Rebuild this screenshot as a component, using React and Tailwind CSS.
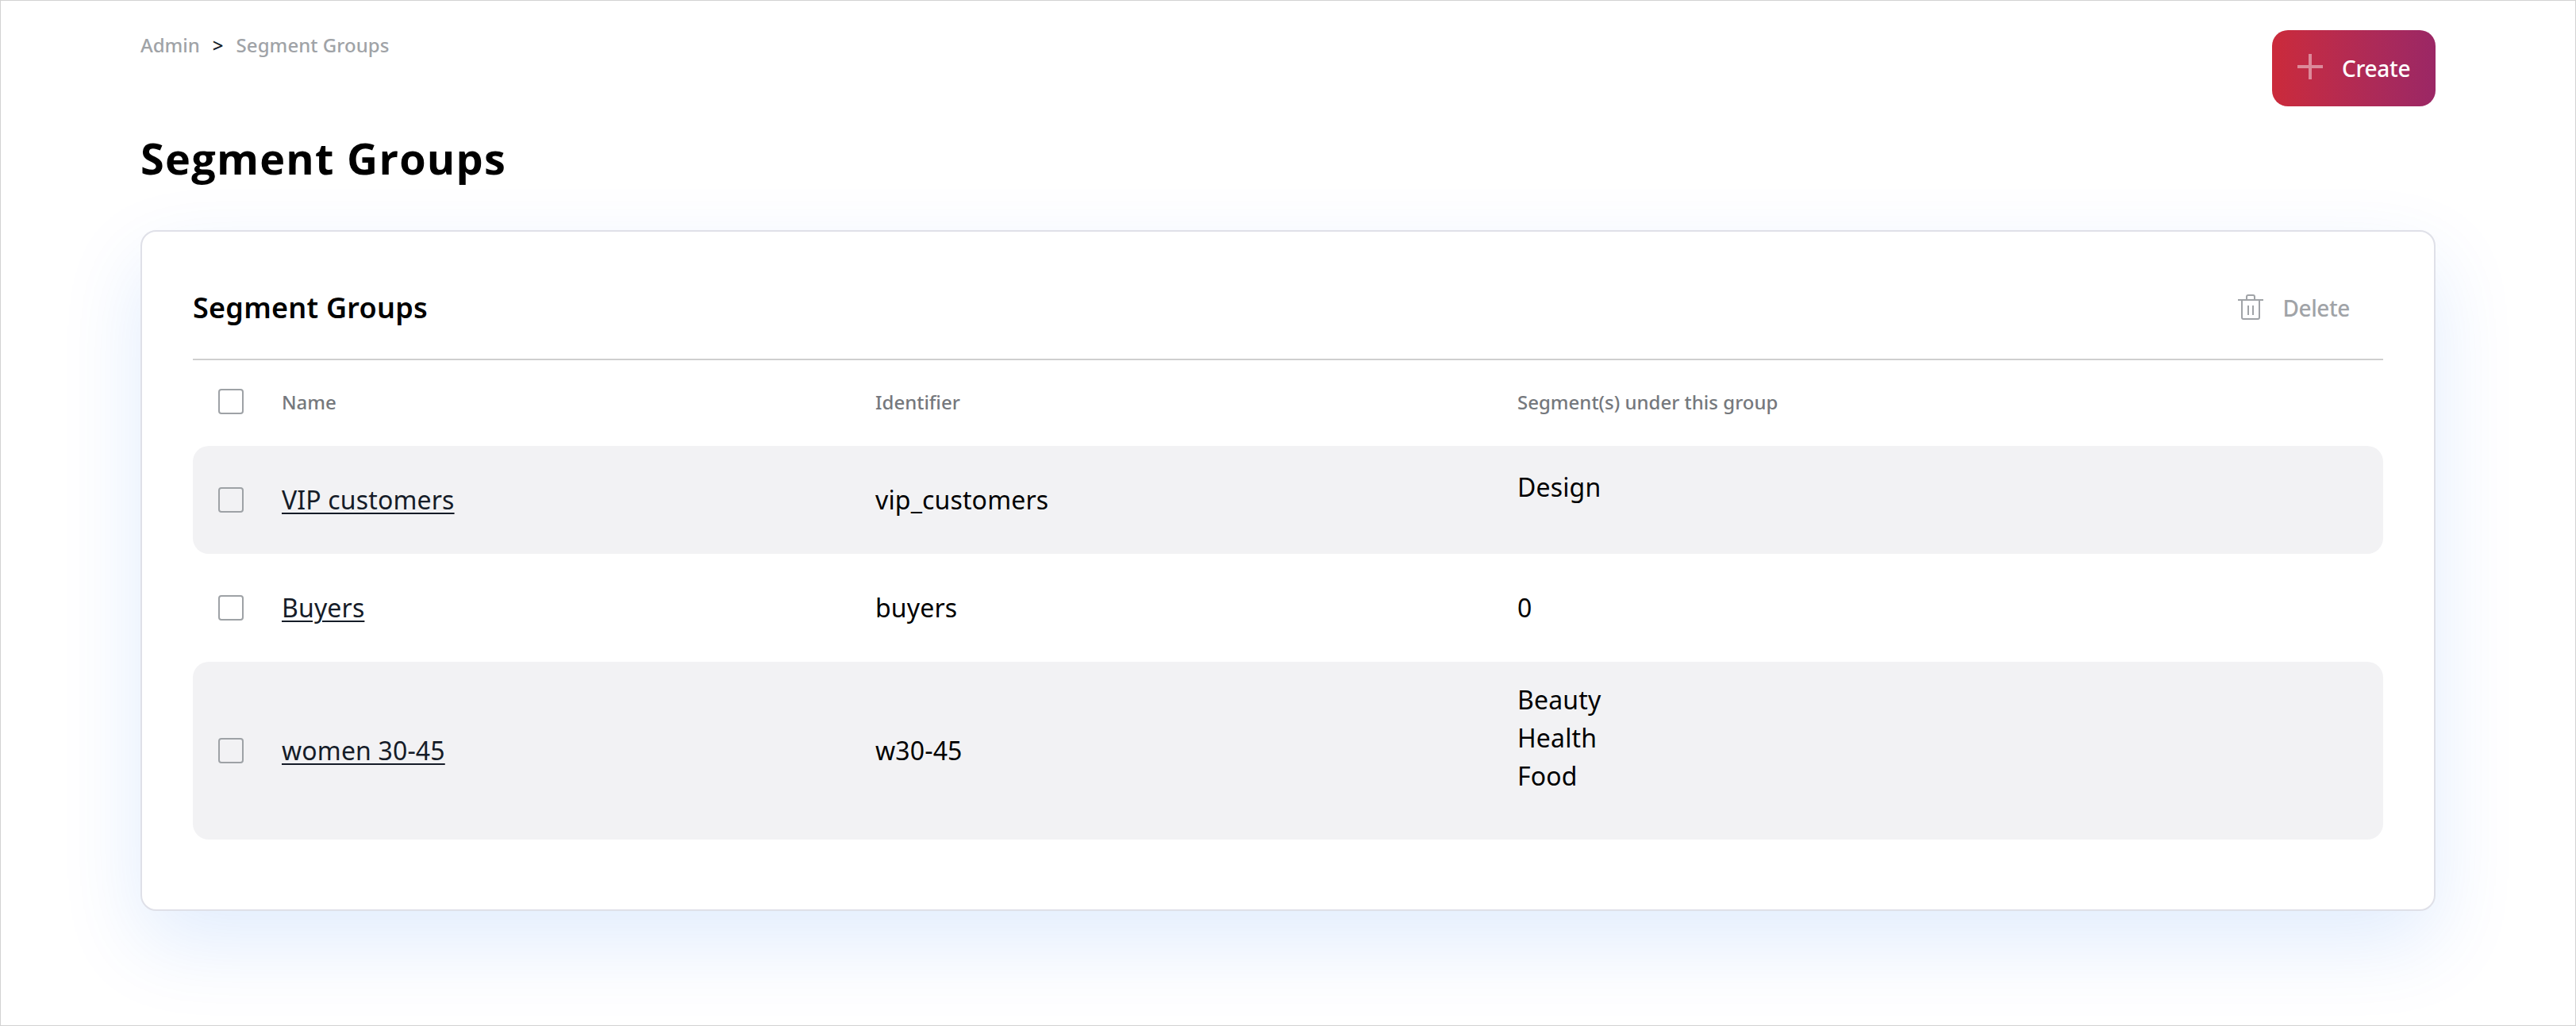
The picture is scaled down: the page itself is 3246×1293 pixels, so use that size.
import React from "react";

const groups = [
  { name: "VIP customers", id: "vip_customers", segments: ["Design"] },
  { name: "Buyers", id: "buyers", segments: [] },
  { name: "women 30-45", id: "w30-45", segments: ["Beauty", "Health", "Food"] },
];

const columns = "grid grid-cols-[112px_748px_809px_1fr] items-center";

function Checkbox() {
  return <span className="ml-8 block size-8 rounded-[4px] border-2 border-[#9ea2a6]" role="checkbox" aria-checked="false" />;
}

function TrashIcon() {
  return (
    <svg className="-mt-0.5 size-8" viewBox="0 0 32 32" fill="none" stroke="currentColor" strokeWidth="2">
      <path d="M0 7h32M11 7V3a2 2 0 0 1 2-2h6a2 2 0 0 1 2 2v4M5 7v22a2 2 0 0 0 2 2h18a2 2 0 0 0 2-2V7M13 14v12M19 14v12" />
    </svg>
  );
}

export default function App() {
  return (
    <div className="h-[1293px] w-[3246px] overflow-hidden border border-[#d2d2d2] bg-white px-44 font-['Noto_Sans',sans-serif] text-[32px] leading-[48px] text-black">
      <header className="flex h-[289px] justify-between pt-[37px]">
        <div>
          <nav className="mt-px flex items-center gap-4 text-[24px] leading-9 font-medium text-[#a0a3a7]">
            <a>Admin</a>
            <span className="text-[#151c28]">&gt;</span>
            <a className="tracking-[0.05px]">Segment Groups</a>
          </nav>
          <h1 className="mt-[88px] font-['Open_Sans',sans-serif] text-[54px] leading-[72px] font-bold tracking-[1.25px]">
            Segment Groups
          </h1>
        </div>
        <button className="flex h-24 w-[206px] items-center gap-6 rounded-[20px] bg-linear-to-r from-[#cb2a3a] to-[#9b2765] pl-8 text-[28px] font-medium tracking-[-0.3px] text-white">
          <svg className="-mt-1 size-8 shrink-0" viewBox="0 0 32 32" stroke="#fff" strokeOpacity="0.45" strokeWidth="4">
            <path d="M0 16h32M16 0v32" fill="none" />
          </svg>
          Create
        </button>
      </header>

      <main className="h-[858px] rounded-[20px] border-2 border-[#dfe0e8] bg-white px-16 shadow-[0_40px_104px_rgba(0,95,240,0.12)]">
        <div className="flex h-[162px] items-center justify-between border-b-2 border-[#cfcfcf] pt-8">
          <h2 className="text-[36px] leading-[54px] font-semibold tracking-[0.25px]">Segment Groups</h2>
          <button className="flex items-center gap-6 pr-[42px] text-[28px] font-[550] tracking-[-0.4px] text-[#a0a3a7]">
            <TrashIcon />
            Delete
          </button>
        </div>

        <div className={columns + " h-[108px] pb-0.5 text-[24px] font-medium text-[#75787d]"}>
          <div className="-mt-0.5">
            <Checkbox />
          </div>
          <span>Name</span>
          <span>Identifier</span>
          <span>Segment(s) under this group</span>
        </div>

        <div>
          {groups.map((g) => (
            <div key={g.id} className={columns + " min-h-[136px] rounded-[20px] py-6 tracking-[0.15px] odd:bg-[#f2f2f4]"}>
              <Checkbox />
              <a className="text-[#151c28] underline decoration-2 underline-offset-4">{g.name}</a>
              <span>{g.id}</span>
              {g.segments.length ? (
                <ul className="mb-8">
                  {g.segments.map((s) => (
                    <li key={s}>{s}</li>
                  ))}
                </ul>
              ) : (
                <span>0</span>
              )}
            </div>
          ))}
        </div>
      </main>
    </div>
  );
}
